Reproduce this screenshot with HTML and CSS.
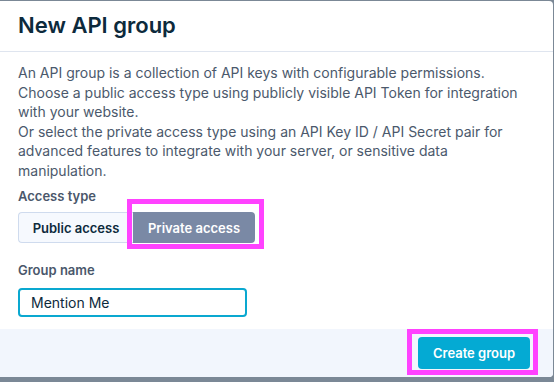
FILE: index.html
```html
<!DOCTYPE html>
<html lang="en">
<head>
<meta charset="utf-8">
<title>New API group</title>
<link rel="stylesheet" href="styles.css">
</head>
<body>
<div class="modal">
  <div class="modal-header">
    <h1 class="modal-title">New API group</h1>
  </div>
  <div class="modal-body">
    <p class="intro">An API group is a collection of API keys with configurable permissions.<br>Choose a public access type using publicly visible API Token for integration with your website.<br>Or select the private access type using an API Key ID / API Secret pair for advanced features to integrate with your server, or sensitive data manipulation.</p>
    <div class="field">
      <div class="field-label">Access type</div>
      <div class="segmented">
        <button class="seg seg-public" type="button">Public access</button>
        <button class="seg seg-private" type="button">Private access</button>
        <span class="highlight hl-private"></span>
      </div>
    </div>
    <div class="field field-name">
      <div class="field-label">Group name</div>
      <div class="input">Mention Me</div>
    </div>
  </div>
  <div class="modal-footer">
    <button class="btn-primary" type="button">Create group</button>
    <span class="highlight hl-create"></span>
  </div>
</div>
</body>
</html>
```
FILE: styles.css
```css
* { box-sizing: border-box; }
html, body { margin: 0; padding: 0; }
body {
  background: #7b8896;
  width: 554px;
  height: 382px;
  overflow: hidden;
  font-family: Inter, "Noto Sans", sans-serif;
}
.modal {
  margin-top: 1px;
  width: 553px;
  height: 376px;
  background: #fff;
  border-radius: 0 4px 4px 0;
  display: flex;
  flex-direction: column;
  overflow: hidden;
}
.modal-header {
  height: 51px;
  border-bottom: 1px solid #dfe5ef;
  padding: 0 18px;
  display: flex;
  align-items: center;
}
.modal-title {
  margin: 0;
  font-size: 22px;
  font-weight: 600;
  color: #0d2a3c;
  letter-spacing: 0;
  padding-bottom: 2px;
}
.modal-body {
  flex: 1;
  padding: 11px 18px 0;
}
.intro {
  margin: 0;
  font-size: 14px;
  line-height: 19.5px;
  color: #4b596c;
}
.field { margin-top: 7px; position: relative; }
.field-name { margin-top: 18px; }
.field-label {
  font-size: 13px;
  font-weight: 600;
  line-height: 18px;
  color: #4a576b;
  margin-bottom: 7px;
}
.field-name .field-label { margin-bottom: 9px; }
.segmented {
  display: flex;
  position: relative;
  width: max-content;
}
.seg {
  font-family: inherit;
  font-size: 13px;
  font-weight: 600;
  height: 31px;
  margin: 0;
  cursor: pointer;
}
.seg-public {
  width: 115px;
  background: #f6f9fe;
  color: #0d2a3c;
  border: 1px solid #cfdbee;
  border-right: none;
  border-radius: 4px 0 0 4px;
}
.seg-private {
  width: 122px;
  background: #7a89a5;
  color: #fff;
  border: none;
  border-radius: 0 4px 4px 0;
}
.input {
  width: 229px;
  height: 29px;
  border: 2px solid #0aa8d0;
  border-radius: 4px;
  padding: 0 11px;
  font-size: 14px;
  line-height: 25px;
  color: #0d2a3c;
}
.modal-footer {
  height: 48px;
  background: #f2f6fd;
  display: flex;
  justify-content: flex-end;
  align-items: center;
  padding-right: 23px;
  position: relative;
}
.btn-primary {
  font-family: inherit;
  font-size: 13px;
  font-weight: 600;
  color: #fff;
  background: #04aad3;
  border: none;
  border-radius: 4px;
  width: 112px;
  height: 32px;
  padding: 0;
  margin: 0;
}
.highlight {
  position: absolute;
  border: 5px solid #ff42ff;
  pointer-events: none;
}
.hl-private {
  left: 109px;
  top: -13px;
  width: 137px;
  height: 50px;
}
.hl-create {
  left: 407px;
  top: 0;
  width: 131px;
  height: 46px;
}
```
